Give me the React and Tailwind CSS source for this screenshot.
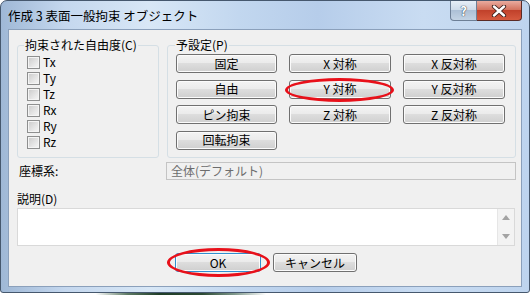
import React from 'react';

const font = "font-['Noto_Sans_CJK_JP','Liberation_Sans',sans-serif]";
const btn =
  'h-[19px] rounded-[3px] border border-[#707070] bg-[linear-gradient(to_bottom,#f3f3f3_0%,#ebebeb_45%,#dddddd_50%,#cfcfcf_100%)] shadow-[inset_0_0_0_1px_#fbfbfb] text-[12px] leading-none text-black flex items-center justify-center';

function Check({ label }) {
  return (
    <div className="h-[16px] flex items-center gap-[3px]">
      <span className="w-[13px] h-[13px] border border-[#8e8f8f] bg-[linear-gradient(135deg,#c9c9c9_0%,#e6e6e6_60%,#f7f7f7_100%)] shadow-[inset_0_0_0_1px_#f4f4f4]" />
      <span className="text-[12px] leading-none">{label}</span>
    </div>
  );
}

function Ring({ className }) {
  return <span className={'absolute rounded-[50%] border-[3px] border-[#e8101a] pointer-events-none ' + className} />;
}

export default function App() {
  const dofs = ['Tx', 'Ty', 'Tz', 'Rx', 'Ry', 'Rz'];
  const presets = ['固定', 'X 対称', 'X 反対称', '自由', 'Y 対称', 'Y 反対称', 'ピン拘束', 'Z 対称', 'Z 反対称', '回転拘束'];

  return (
    <div className={'w-[532px] h-[295px] bg-white overflow-hidden ' + font}>
      <div className="w-[530px] h-[293px] rounded-t-[7px] rounded-b-[3px] border border-[#46586e] bg-[linear-gradient(to_right,#9fb8d6_0%,#c4d7ee_12%,#d8e7f6_28%,#c2d7ef_45%,#b6cdea_60%,#c9dcf2_80%,#bed4ee_100%)] flex flex-col">
        {/* title bar */}
        <div className="h-[28px] flex justify-between">
          <div className="pl-[7px] pt-[7px] text-[12.5px] leading-[16px] text-black">作成 3 表面一般拘束 オブジェクト</div>
          <div className="flex mr-[7px] h-[20px]">
            <div className="w-[27px] rounded-bl-[4px] border border-t-0 border-[#6d7f96] bg-[linear-gradient(to_bottom,#e6eef7_0%,#cfdcea_45%,#adc0d6_50%,#c3d3e4_100%)] flex items-center justify-center">
              <span className="text-[13px] font-bold leading-none text-white [text-shadow:0_0_1px_#2a3646,0_0_1px_#2a3646]">?</span>
            </div>
            <div className="w-[45px] rounded-br-[4px] border border-l-0 border-t-0 border-[#5a2a25] bg-[linear-gradient(to_bottom,#e9ab9f_0%,#d47460_45%,#c1412b_50%,#d65a3f_100%)] flex items-center justify-center">
              <svg width="16" height="12" viewBox="0 0 16 12">
                <path d="M3 1.5 L13 10.5 M13 1.5 L3 10.5" stroke="#3b1e1a" strokeWidth="4.2" strokeLinecap="round" />
                <path d="M3 1.5 L13 10.5 M13 1.5 L3 10.5" stroke="#ffffff" strokeWidth="2.4" strokeLinecap="round" />
              </svg>
            </div>
          </div>
        </div>

        {/* client area */}
        <div className="mx-[7px] mb-[5px] flex-1 border border-[#8ba0bb] bg-[#f0f0f0] flex flex-col pt-[8px] text-black">
          <div className="flex pl-[8px] gap-[8px] h-[120px]">
            <fieldset className="w-[142px] h-full rounded-[3px] border border-[#d5dfe5] pl-[9px]">
              <legend className="ml-[-3px] px-[1px] text-[12px] leading-[14px]">拘束された自由度(C)</legend>
              <div className="flex flex-col pt-[2px]">
                {dofs.map((d) => (
                  <Check key={d} label={d} />
                ))}
              </div>
            </fieldset>
            <fieldset className="w-[349px] h-full rounded-[3px] border border-[#d5dfe5] pl-[8px]">
              <legend className="ml-[-1px] px-[1px] text-[12px] leading-[14px]">予設定(P)</legend>
              <div className="grid grid-cols-[101px_102px_102px] gap-x-[12px] gap-y-[6.5px] pt-[2px]">
                {presets.map((p) => (
                  <div key={p} className="relative">
                    <div className={btn}>{p}</div>
                    {p === 'Y 対称' && <Ring className="-left-[4px] -right-[3px] -top-[2px] -bottom-[3px]" />}
                  </div>
                ))}
              </div>
            </fieldset>
          </div>

          <div className="mt-[4px] h-[18px] flex items-center">
            <span className="ml-[10px] w-[147px] text-[12px] leading-none">座標系:</span>
            <div className="w-[350px] h-[18px] border border-[#c4c4c4] bg-[#f0f0f0] flex items-center pl-[4px] text-[12px] leading-none text-[#6d6d6d]">
              全体(デフォルト)
            </div>
          </div>

          <div className="mt-[12px] h-[14px] ml-[8px] text-[12px] leading-[14px]">説明(D)</div>

          <div className="mt-[2px] ml-[8px] w-[498px] h-[38px] border border-[#d9d9d9] bg-white flex justify-end">
            <div className="w-[17px] h-full bg-[#f3f3f3] border-l border-[#e6e6e6] flex flex-col items-center justify-between py-[6px]">
              <svg width="8" height="5" viewBox="0 0 8 5">
                <path d="M0 5 L4 0 L8 5 Z" fill="#a3a3a3" />
              </svg>
              <svg width="8" height="5" viewBox="0 0 8 5">
                <path d="M0 0 L8 0 L4 5 Z" fill="#a3a3a3" />
              </svg>
            </div>
          </div>

          <div className="mt-[7px] flex justify-center gap-[12px] pl-[2px]">
            <div className="relative">
              <div className={btn + ' w-[86px] !border-[#2f8fcf] shadow-[inset_0_0_0_1px_#5fd4f7]'}>OK</div>
              <Ring className="-left-[8px] -right-[9px] -top-[5px] -bottom-[5px]" />
            </div>
            <div className={btn + ' w-[84px]'}>キャンセル</div>
          </div>
        </div>
      </div>
      <div className="h-[2px] bg-[linear-gradient(to_right,#ffffff_18%,#5d7a64_24%,#1f3d27_30%,#2c4a33_38%,#7d978a_44%,#ffffff_50%)]" />
    </div>
  );
}
